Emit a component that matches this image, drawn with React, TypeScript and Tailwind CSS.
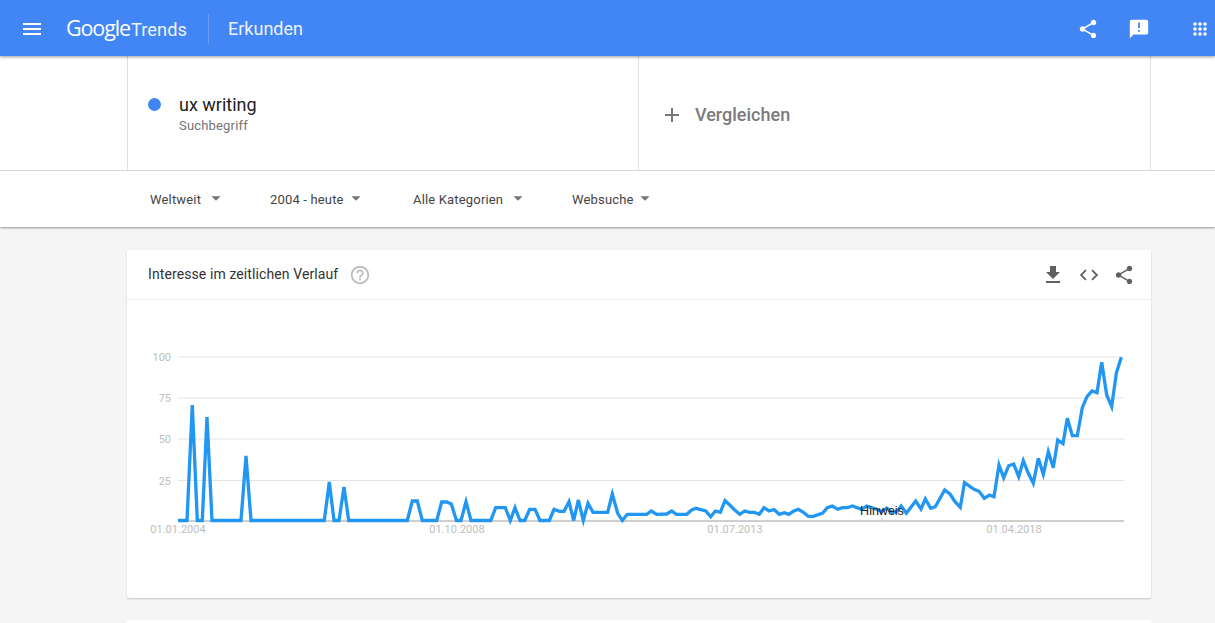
import { MdMenu, MdShare, MdAnnouncement, MdFileDownload, MdCode, MdHelpOutline, MdAdd, MdArrowDropDown } from "react-icons/md";

const points = [
  [178, 520.5], [187, 520.5], [192.3, 405], [197.3, 520.5], [202.3, 520.5], [207, 417], [212, 520.5], [241, 520.5],
  [246, 456], [251, 520.5], [324.3, 520.5], [329.3, 482], [334, 520.5], [339, 520.5], [344, 487], [348.7, 520.5],
  [407.3, 520.5], [412.3, 501], [417.3, 501], [422.3, 520.5], [436.7, 520.5], [441.7, 502], [446.7, 502], [451.3, 504],
  [456.5, 520.5], [461, 520.5], [466, 501.7], [471, 520.5], [490.7, 520.5], [495.7, 507.7], [505.3, 507.7], [510.3, 520.5],
  [515, 507.7], [520, 520.5], [524.7, 520.5], [529.7, 509.3], [535, 509.3], [540, 520.5], [549.3, 520.5], [554, 509.3],
  [559.3, 511.3], [564, 511.3], [569, 501.7], [573.7, 520.5], [578.3, 500], [583.3, 520.5], [588, 503.3], [593, 512.3],
  [607.7, 512.3], [612.3, 494], [617.7, 513.3], [622.3, 520.5], [627.3, 514.3], [646.7, 514.3], [651.3, 511], [656.7, 514.3],
  [666.7, 514], [671.7, 511], [676.3, 514.3], [686.7, 514.3], [691.7, 510], [696, 508.3], [705.7, 511], [710.7, 516.7],
  [715.3, 511], [720.3, 512.3], [725, 500.7], [730, 505.3], [734.7, 510], [739.7, 514.3], [744.7, 511], [749.3, 512.3],
  [754.3, 512.3], [759.3, 514.3], [764, 507.7], [769, 511], [774, 509.5], [779.3, 514.3], [784.3, 512.7], [788.7, 514.3],
  [793.3, 511.3], [798.3, 509.3], [803.3, 512.3], [808.3, 516.3], [813.3, 516.3], [822.7, 513], [827.3, 507.7], [832.3, 506],
  [837.7, 509.3], [842.3, 507.7], [847.3, 507.7], [852.3, 506], [861.7, 509.3], [866.7, 506], [876.7, 509.3], [881.7, 511.7],
  [886.7, 508], [891.7, 512.3], [896.7, 511.7], [901.3, 506], [906.3, 513.3], [915.7, 501], [921, 509], [925.3, 499],
  [930.7, 508.3], [935.3, 506.7], [944.7, 490], [950, 494], [955, 501.7], [960.3, 507.3], [964.5, 482.7], [974, 489.3],
  [979, 491.3], [984.3, 498.3], [989.3, 495], [994, 496.7], [999, 465], [1003.7, 477.7], [1008.7, 465.7], [1013.7, 464],
  [1018.7, 476.7], [1023.3, 460.7], [1028.3, 473.3], [1033.3, 483.3], [1038.3, 458.3], [1043.3, 474.3], [1048.3, 451.7],
  [1053.3, 467.7], [1057.7, 440], [1063, 443.7], [1067.3, 418.3], [1072.3, 435.7], [1077.3, 435.7], [1082.3, 407.7],
  [1087, 396.7], [1092, 391], [1097, 392.7], [1101.7, 362.3], [1106.7, 395], [1111.7, 406.7], [1116.3, 373.3], [1121.3, 357.3],
];

const gridLines = [
  { y: 357, label: "100" },
  { y: 398, label: "75" },
  { y: 439, label: "50" },
  { y: 480.5, label: "25" },
];

const dates = [
  { x: 178, label: "01.01.2004" },
  { x: 457, label: "01.10.2008" },
  { x: 735, label: "01.07.2013" },
  { x: 1014, label: "01.04.2018" },
];

function AppsIcon() {
  const dots = [1195, 1200, 1205];
  return (
    <svg width="16" height="16" viewBox="1192 20 16 16" fill="white">
      {[23, 28, 33].map((cy) => dots.map((cx) => <circle key={`${cx}-${cy}`} cx={cx} cy={cy} r="1.8" />))}
    </svg>
  );
}

function Filter({ label, className, arrowClass }: { label: string; className: string; arrowClass: string }) {
  return (
    <div className={`flex items-center text-[13px] tracking-[0.17px] text-[#444] ${className}`}>
      <span className="pt-px">{label}</span>
      <MdArrowDropDown size={22} className={`-mt-[2px] shrink-0 text-[#757575] ${arrowClass}`} />
    </div>
  );
}

function Chart() {
  return (
    <svg className="block w-full" height="298" viewBox="127 300 1024 298">
      {gridLines.map((g) => (
        <g key={g.label}>
          <line x1="178" x2="1124" y1={g.y} y2={g.y} stroke="#e4e4e4" strokeWidth="1" />
          <text x="171" y={g.y + 4} textAnchor="end" fontSize="11" fill="#bdbdbd" fontFamily="Roboto, sans-serif">
            {g.label}
          </text>
        </g>
      ))}
      <line x1="178" x2="1124" y1="521" y2="521" stroke="#9e9e9e" strokeWidth="1" />
      <line x1="882" x2="882" y1="518" y2="521" stroke="#bdbdbd" strokeWidth="1" />
      {dates.map((d) => (
        <text key={d.label} x={d.x} y="533" textAnchor="middle" fontSize="11" fill="#bdbdbd" fontFamily="Roboto, sans-serif">
          {d.label}
        </text>
      ))}
      <polyline
        points={points.map((p) => p.join(",")).join(" ")}
        fill="none"
        stroke="#2196f3"
        strokeWidth="3.3"
        strokeLinejoin="miter"
      />
      <text x="882" y="515" textAnchor="middle" fontSize="12.5" fill="#222" fontFamily="'Liberation Sans', sans-serif">
        Hinweis
      </text>
    </svg>
  );
}

export default function App() {
  return (
    <div className="h-[623px] overflow-hidden bg-[#f5f5f5] font-['Roboto',sans-serif] antialiased">
      {/* top bar */}
      <header className="relative z-20 flex h-14 items-center bg-[#4285f4] pl-5 pr-[7px] pt-px text-white shadow-[0_1px_3px_rgba(0,0,0,0.4)]">
        <MdMenu size={24} />
        <div className="ml-[22px] flex w-[142px] items-baseline">
          <span className="font-['Open_Sans',sans-serif] text-[21.5px] tracking-[-1.1px]">Google</span>
          <span className="ml-[1px] text-[18.3px] opacity-90">Trends</span>
        </div>
        <div className="h-[30px] w-px bg-white/20" />
        <span className="ml-[19px] text-[18px] opacity-90">Erkunden</span>
        <div className="ml-auto flex items-center">
          <MdShare size={22} />
          <MdAnnouncement size={22} className="ml-[29px]" />
          <div className="ml-[42px] flex w-[16px]">
            <AppsIcon />
          </div>
        </div>
      </header>

      {/* search term */}
      <div className="flex h-[115px] border-b border-[#e0e0e0] bg-white pl-[127px]">
        <div className="flex w-[511px] items-start border-l border-[#e0e0e0] pl-[20px] pt-[38px]">
          <div className="mt-[4px] h-[13px] w-[13px] rounded-full bg-[#4285f4]" />
          <div className="ml-[18px]">
            <div className="text-[18px] leading-[22px] text-[#212121]">ux writing</div>
            <div className="mt-[1px] text-[13px] leading-[18px] tracking-[0.18px] text-[#757575]">Suchbegriff</div>
          </div>
        </div>
        <div className="flex w-[513px] items-center border-x border-[#e0e0e0] pl-[21px] pt-[3px]">
          <MdAdd size={24} className="text-[#757575]" />
          <span className="ml-[11px] text-[18px] font-medium text-[#7b7b7b]">Vergleichen</span>
        </div>
      </div>

      {/* filters */}
      <div className="relative z-10 flex h-[56px] items-center bg-white pl-[150px] shadow-[0_1px_2px_rgba(0,0,0,0.4)]">
        <Filter label="Weltweit" className="w-[120px]" arrowClass="ml-[4px]" />
        <Filter label="2004 - heute" className="w-[143px]" arrowClass="ml-[1px]" />
        <Filter label="Alle Kategorien" className="w-[159px]" arrowClass="ml-[4px]" />
        <Filter label="Websuche" className="w-[90px]" arrowClass="ml-0" />
      </div>

      {/* interest over time */}
      <section className="mx-[127px] mt-[23px] w-[1024px] rounded-[2px] bg-white shadow-[0_1px_2px_rgba(0,0,0,0.2)]">
        <div className="flex h-[50px] items-center border-b border-[#eeeeee] pl-[21px] pr-[16px]">
          <span className="text-[14px] tracking-[0.1px] text-[#333]">Interesse im zeitlichen Verlauf</span>
          <MdHelpOutline size={22} className="ml-[11px] text-[#bdbdbd]" />
          <div className="ml-auto flex items-center text-[#616161]">
            <MdFileDownload size={24} />
            <MdCode size={22} className="ml-[13px]" />
            <MdShare size={22} className="ml-[13px]" />
          </div>
        </div>
        <Chart />
      </section>
      <section className="mx-[127px] mt-[22px] h-20 w-[1024px] rounded-[2px] bg-white" />
    </div>
  );
}
